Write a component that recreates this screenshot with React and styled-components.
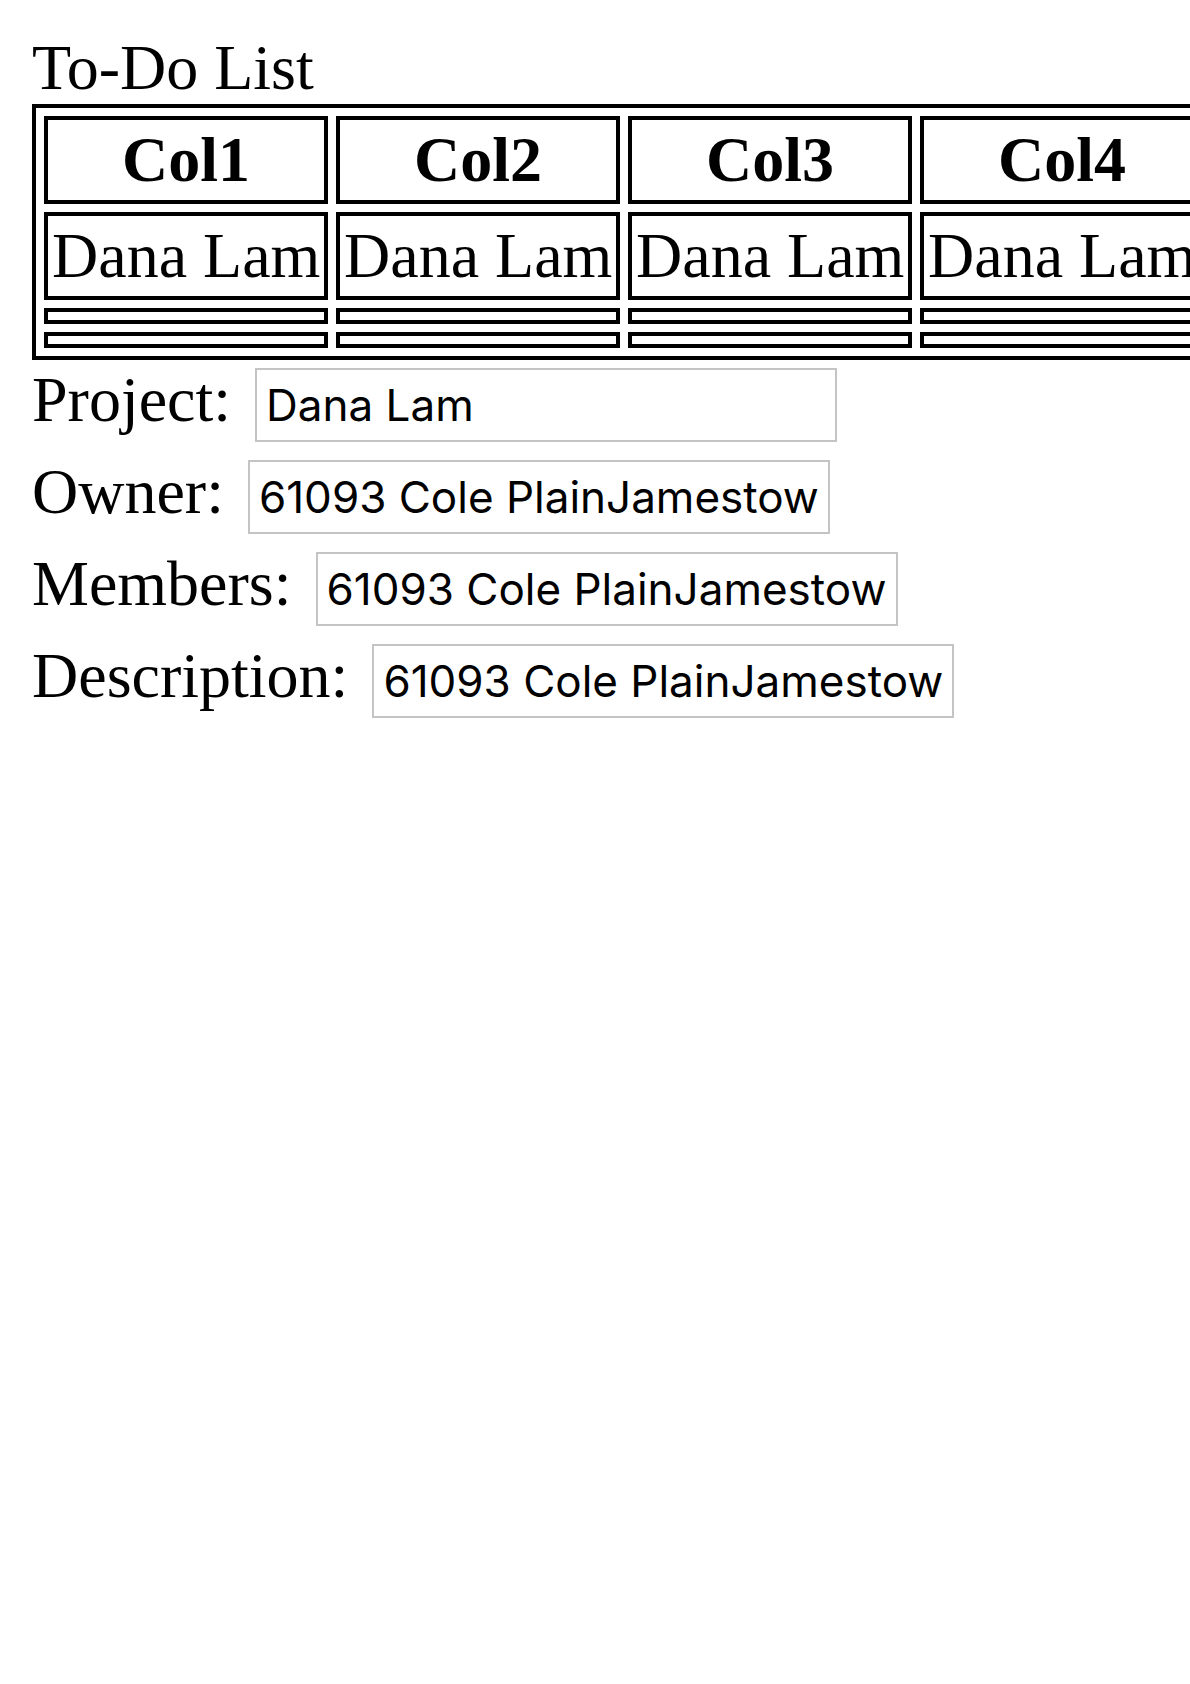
import React from "react"
import styled, { createGlobalStyle } from "styled-components"

const GlobalStyle = createGlobalStyle`
  html {
    overflow: hidden;
  }
  body {
    margin: 32px 0 0 32px;
    background: #fff;
    color: #000;
    font-family: "Liberation Serif", "Times New Roman", serif;
    font-size: 64px;
    line-height: 72px;
  }
`

const Title = styled.div`
  height: 72px;
`

const TableClip = styled.div`
  width: 100%;
  overflow: hidden;
`

const Grid = styled.table`
  width: 1184px;
  table-layout: fixed;
  border: 4px solid #000;
  border-collapse: separate;
  border-spacing: 8px;
  font-size: 64px;
  line-height: 72px;
`

const HeadCell = styled.th`
  width: 268px;
  border: 4px solid #000;
  padding: 4px;
  font-weight: bold;
  text-align: center;
  white-space: nowrap;
`

const Cell = styled.td`
  border: 4px solid #000;
  padding: 4px;
  white-space: nowrap;
  empty-cells: show;
`

const Form = styled.div`
  display: flex;
  flex-direction: column;
  gap: 14px;
  padding-top: 4px;
`

const Row = styled.div`
  display: flex;
  align-items: baseline;
  gap: 24px;
`

const Label = styled.label`
  white-space: nowrap;
  line-height: 72px;
`

const Field = styled.input`
  box-sizing: border-box;
  width: 582px;
  height: 74px;
  margin: 0;
  padding: 0 9px;
  border: 2px solid #c4c4c4;
  border-radius: 0;
  outline: none;
  background: #fff;
  color: #000;
  font-family: Inter, "Noto Sans", sans-serif;
  font-size: 44px;
  line-height: 70px;
`

const columns = ["Col1", "Col2", "Col3", "Col4"]

const fields = [
  { id: "project", label: "Project:", value: "Dana Lam" },
  { id: "owner", label: "Owner:", value: "61093 Cole PlainJamestown" },
  { id: "members", label: "Members:", value: "61093 Cole PlainJamestown" },
  { id: "description", label: "Description:", value: "61093 Cole PlainJamestown" },
]

export default function App() {
  return (
    <>
      <GlobalStyle />
      <Title>To-Do List</Title>
      <TableClip>
        <Grid>
          <thead>
            <tr>
              {columns.map(c => <HeadCell key={c}>{c}</HeadCell>)}
            </tr>
          </thead>
          <tbody>
            <tr>
              {columns.map(c => <Cell key={c}>Dana Lam</Cell>)}
            </tr>
            <tr>
              {columns.map(c => <Cell key={c} />)}
            </tr>
            <tr>
              {columns.map(c => <Cell key={c} />)}
            </tr>
          </tbody>
        </Grid>
      </TableClip>
      <Form>
        {fields.map(f => (
          <Row key={f.id}>
            <Label htmlFor={f.id}>{f.label}</Label>
            <Field id={f.id} defaultValue={f.value} />
          </Row>
        ))}
      </Form>
    </>
  )
}
